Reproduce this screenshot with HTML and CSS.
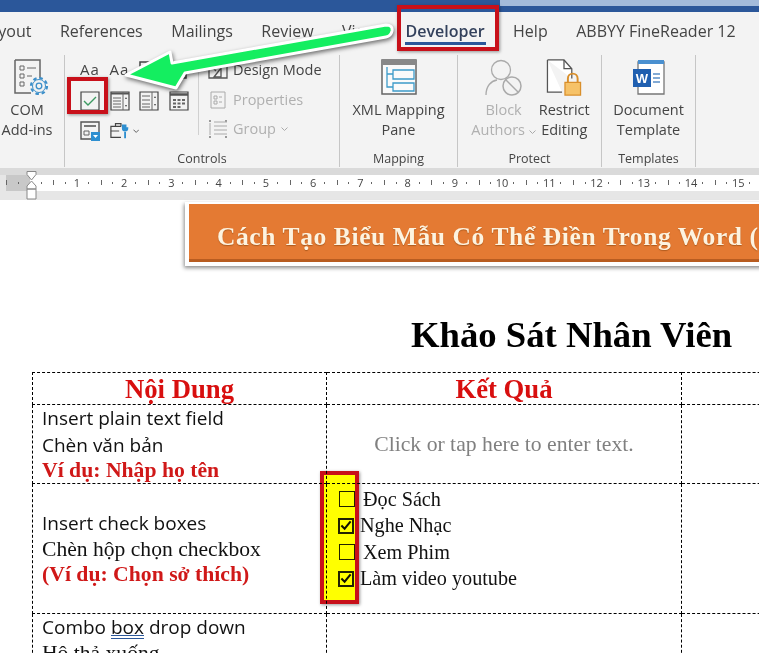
FILE: index.html
```html
<!DOCTYPE html>
<html lang="en">
<head>
    <meta charset="UTF-8">
    <meta name="viewport" content="width=device-width, initial-scale=1.0">
    <title>Biểu Mẫu Word</title>
    <link rel="stylesheet" href="styles.css">
</head>
<body>
    <!-- Title bar -->
    <div class="titlebar"><div class="titlebar-light"></div></div>

    <!-- Tabs -->
    <div class="tabs">
        <span class="tab">Layout</span>
        <span class="tab">References</span>
        <span class="tab">Mailings</span>
        <span class="tab">Review</span>
        <span class="tab">View</span>
        <span class="tab tab-active">Developer</span>
        <span class="tab">Help</span>
        <span class="tab">ABBYY FineReader 12</span>
    </div>

    <!-- Ribbon -->
    <div class="ribbon">
        <div class="group group-addins">
            <div class="group-body">
                <div class="big-btn">
                    <svg class="big-icon" width="36" height="37" viewBox="0 0 36 37">
                        <path d="M1 1h25v20M17 34H1V1" fill="none" stroke="#666" stroke-width="1.500"/>
                        <path d="M6 7h4v4H6zM6 15h4v4H6zM6 23h4v4H6z" fill="none" stroke="#666"/>
                        <path d="M13 9h9M13 17h5" stroke="#666"/>
                        <circle cx="25" cy="27" r="8" fill="#f3f3f3" stroke="#3d8fc9" stroke-width="2.200" stroke-dasharray="3.500 2.800"/>
                        <circle cx="25" cy="27" r="6.500" fill="none" stroke="#3d8fc9"/>
                        <circle cx="25" cy="27" r="2.800" fill="none" stroke="#3d8fc9" stroke-width="1.300"/>
                    </svg>
                    <span>COM<br>Add-ins</span>
                </div>
            </div>
        </div>

        <div class="group group-controls">
            <div class="group-body controls-body">
                <div class="small-grid">
                    <span class="aa">Aa</span>
                    <span class="aa">Aa</span>
                    <svg width="18" height="18" viewBox="0 0 18 18"><path d="M1 1h16v16H1z" fill="none" stroke="#444" stroke-width="1.500"/></svg>
                    <svg width="18" height="18" viewBox="0 0 18 18"><path d="M1 1h16v16H1z" fill="none" stroke="#444" stroke-width="1.500"/></svg>

                    <svg width="20" height="20" viewBox="0 0 20 20"><path d="M1 1h18v18H1z" fill="none" stroke="#444" stroke-width="1.200"/><path d="M4 10l4 4 8-8" fill="none" stroke="#3d9a62" stroke-width="1.400"/></svg>
                    <svg width="20" height="20" viewBox="0 0 20 20"><path d="M1 1h18v18H1z" fill="none" stroke="#444" stroke-width="1.200"/><path d="M1 2.500h18" stroke="#555" stroke-width="2"/><path d="M3 7h8M3 10h8M3 13h8M3 16h8M13 1v18" stroke="#666"/><path d="M15 8h2l-1-2zM15 14h2l-1 2z" fill="#444"/></svg>
                    <svg width="20" height="20" viewBox="0 0 20 20"><path d="M1 1h18v18H1z" fill="none" stroke="#444" stroke-width="1.200"/><path d="M3 5h8M3 9h8M3 13h8M3 16h8M13 1v18" stroke="#666"/><path d="M15 7h2l-1-2zM15 13h2l-1 2z" fill="#444"/></svg>
                    <svg width="20" height="20" viewBox="0 0 20 20"><path d="M1 1h18v18H1z" fill="none" stroke="#444" stroke-width="1.200"/><path d="M1 3.500h18" stroke="#555" stroke-width="2.500"/><path d="M4 8h3v2H4zM8.500 8h3v2h-3zM13 8h3v2h-3zM4 11.500h3v2H4zM8.500 11.500h3v2h-3zM13 11.500h3v2h-3zM4 15h3v2H4zM8.500 15h3v2h-3z" fill="#666"/></svg>

                    <svg width="20" height="20" viewBox="0 0 20 20"><path d="M11 18H1V1h18v10" fill="none" stroke="#555" stroke-width="1.400"/><path d="M4 5h12" stroke="#777" stroke-width="2"/><path d="M4 10h5v4H4z" fill="none" stroke="#666"/><path d="M11 11h9v9h-9z" fill="#2e8fd0"/><path d="M13 14h5l-2.500 3z" fill="#fff"/></svg>
                    <div class="tools-btn">
                        <svg width="22" height="20" viewBox="0 0 22 20"><path d="M12 5H1v12h11M6 5V2h6v3" fill="none" stroke="#444" stroke-width="1.300"/><path d="M1 10h9" stroke="#444"/><path d="M13 3v4a3.500 3.500 0 0 0 7 0V3v3h-2V3zM15.500 10h2v8h-2z" fill="#2e8fd0"/></svg>
                        <svg width="7" height="5" viewBox="0 0 7 5"><path d="M.5.500l3 3 3-3" fill="none" stroke="#555"/></svg>
                    </div>
                </div>
                <div class="design-col">
                    <div class="design-row">
                        <svg width="20" height="18" viewBox="0 0 20 18"><path d="M1 3h18v14H1z" fill="none" stroke="#555" stroke-width="1.300"/><path d="M6 16L13 7v9zM3 5l5 5" fill="none" stroke="#555" stroke-width="1.300"/><path d="M1 1h18" stroke="#999"/></svg>
                        <span>Design Mode</span>
                    </div>
                    <div class="design-row is-disabled">
                        <svg width="20" height="18" viewBox="0 0 20 18"><path d="M3 1h14v16H3z" fill="none" stroke="#aaa"/><path d="M6 5h3v3H6zM6 10h3v3H6z" fill="none" stroke="#aaa"/><path d="M11 6h3M11 11h3" stroke="#aaa"/></svg>
                        <span>Properties</span>
                    </div>
                    <div class="design-row is-disabled">
                        <svg width="20" height="20" viewBox="0 0 20 20"><path d="M1 1h2v2H1zM17 1h2v2h-2zM1 17h2v2H1zM17 17h2v2h-2z" fill="#999"/><path d="M2 4v12M6 3h13M6 7h13M6 11h13M6 15h13" stroke="#aaa"/></svg>
                        <span>Group</span>
                        <svg width="7" height="5" viewBox="0 0 7 5"><path d="M.5.500l3 3 3-3" fill="none" stroke="#aaa"/></svg>
                    </div>
                </div>
            </div>
            <div class="group-label">Controls</div>
        </div>

        <div class="group group-mapping">
            <div class="group-body group-center">
                <div class="big-btn">
                    <svg class="big-icon" width="36" height="37" viewBox="0 0 36 37">
                        <path d="M1 1h34v34H1z" fill="#fafafa" stroke="#666" stroke-width="1.500"/>
                        <path d="M1 1h34v5H1z" fill="#888"/>
                        <path d="M12 11h21v9H12zM12 24h21v8H12zM6 8v20h6M6 15h6" fill="none" stroke="#3d9bc9" stroke-width="1.300"/>
                    </svg>
                    <span>XML Mapping<br>Pane</span>
                </div>
            </div>
            <div class="group-label">Mapping</div>
        </div>

        <div class="group group-protect">
            <div class="group-body group-center protect-body">
                <div class="big-btn is-disabled">
                    <svg class="big-icon" width="38" height="37" viewBox="0 0 38 37">
                        <circle cx="16" cy="11" r="9.500" fill="none" stroke="#aaa" stroke-width="1.300"/>
                        <path d="M1 36c0-9 5-14 11-15" fill="none" stroke="#aaa" stroke-width="1.300"/>
                        <circle cx="27" cy="27" r="9" fill="none" stroke="#aaa" stroke-width="1.500"/>
                        <path d="M21 21l12 12" stroke="#aaa" stroke-width="1.500"/>
                    </svg>
                    <span>Block<br>Authors <svg width="7" height="5" viewBox="0 0 7 5"><path d="M.5.500l3 3 3-3" fill="none" stroke="#aaa"/></svg></span>
                </div>
                <div class="big-btn">
                    <svg class="big-icon" width="36" height="38" viewBox="0 0 36 38">
                        <path d="M1 1h17l8 9v10M16 34H1V1" fill="#fff" stroke="#555" stroke-width="1.300"/>
                        <path d="M18 1v9h8" fill="none" stroke="#555" stroke-width="1.300"/>
                        <path d="M19 24h16v13H19z" fill="#f6c268" stroke="#d98f2b" stroke-width="1.300"/>
                        <path d="M22 24v-4a5 5 0 0 1 10 0v4" fill="none" stroke="#d98f2b" stroke-width="2"/>
                    </svg>
                    <span>Restrict<br>Editing</span>
                </div>
            </div>
            <div class="group-label">Protect</div>
        </div>

        <div class="group group-templates">
            <div class="group-body group-center">
                <div class="big-btn">
                    <svg class="big-icon" width="34" height="37" viewBox="0 0 34 37">
                        <path d="M6 3h26v32H6z" fill="#fff" stroke="#777" stroke-width="1.300"/>
                        <path d="M6 1h26v4H6z" fill="#4a90d0"/>
                        <path d="M1 10h18v18H1z" fill="#1f5fb0"/>
                        <text class="w-letter" x="10" y="24" text-anchor="middle">W</text>
                        <path d="M21 15h7M21 19h7M21 23h7" stroke="#5a8fc8" stroke-width="1.500"/>
                    </svg>
                    <span>Document<br>Template</span>
                </div>
            </div>
            <div class="group-label">Templates</div>
        </div>
    </div>

    <!-- Ruler -->
    <div class="ruler-band">
        <div class="ruler">
            <span class="inch"></span>
            <span class="inch">1</span>
            <span class="inch">2</span>
            <span class="inch">3</span>
            <span class="inch">4</span>
            <span class="inch">5</span>
            <span class="inch">6</span>
            <span class="inch">7</span>
            <span class="inch">8</span>
            <span class="inch">9</span>
            <span class="inch">10</span>
            <span class="inch">11</span>
            <span class="inch">12</span>
            <span class="inch">13</span>
            <span class="inch">14</span>
            <span class="inch">15</span>
        </div>
    </div>

    <!-- Page -->
    <div class="page">
        <div class="banner">Cách Tạo Biểu Mẫu Có Thể Điền Trong Word (</div>
        <h1 class="doc-title">Khảo Sát Nhân Viên</h1>
        <table class="survey">
            <tr class="row-head">
                <th class="col-a">Nội Dung</th>
                <th class="col-b">Kết Quả</th>
                <th class="col-c"></th>
            </tr>
            <tr class="row-text">
                <td>
                    <div class="calibri">Insert plain text field</div>
                    <div class="calibri">Chèn văn bản</div>
                    <div class="red-note">Ví dụ: Nhập họ tên</div>
                </td>
                <td class="placeholder">Click or tap here to enter text.</td>
                <td></td>
            </tr>
            <tr class="row-check">
                <td>
                    <div class="calibri">Insert check boxes</div>
                    <div class="serif-line">Chèn hộp chọn checkbox</div>
                    <div class="red-note">(Ví dụ: Chọn sở thích)</div>
                </td>
                <td class="check-cell">
                    <div class="check-row"><span class="box"></span><span class="check-label">Đọc Sách</span></div>
                    <div class="check-row"><span class="box is-checked"><svg width="13" height="11" viewBox="0 0 13 11"><path d="M1.500 5.500l3.500 3.500 6.500-8" fill="none" stroke="#111" stroke-width="2.200"/></svg></span><span class="check-label is-tight">Nghe Nhạc</span></div>
                    <div class="check-row"><span class="box"></span><span class="check-label">Xem Phim</span></div>
                    <div class="check-row"><span class="box is-checked"><svg width="13" height="11" viewBox="0 0 13 11"><path d="M1.500 5.500l3.500 3.500 6.500-8" fill="none" stroke="#111" stroke-width="2.200"/></svg></span><span class="check-label is-tight">Làm video youtube</span></div>
                </td>
                <td></td>
            </tr>
            <tr class="row-combo">
                <td>
                    <div class="calibri">Combo <span class="squiggle">box</span> drop down</div>
                    <div class="serif-line">Hộ thả xuống</div>
                </td>
                <td></td>
                <td></td>
            </tr>
        </table>
    </div>

    <!-- Annotations on top of the screenshot -->
    <svg class="indent-marker" width="11" height="29" viewBox="0 0 11 29">
        <path d="M1 .5h9v3L5.500 9 1 3.500zM5.500 10L10 15v3H1v-3zM1 18h9v10H1z" fill="#fff" stroke="#888"/>
    </svg>
    <div class="mark mark-developer"></div>
    <div class="mark mark-checkbox"></div>
    <div class="mark mark-yellow"></div>
    <svg class="arrow" width="759" height="120" viewBox="0 0 759 120">
        <path class="arrow-shape" d="M126 75L170 52L172 63L386 25Q393 25 392 31Q391 36 386 37L185 73L176 88Z"/>
    </svg>
</body>
</html>
```

FILE: styles.css
```css
/* General styles */
html, body {
    margin: 0;
    padding: 0;
}

body {
    width: 759px;
    height: 653px;
    overflow: hidden;
    position: relative;
    background: #fff;
    font-family: "Liberation Serif", serif;
    color: #111;
}

/* Title bar */
.titlebar {
    height: 12px;
    background: #2b579a;
}

.titlebar-light {
    height: 6px;
    margin-left: 500px;
    background: #a3bbdb;
}

/* Tabs */
.tabs {
    height: 36px;
    display: flex;
    align-items: center;
    gap: 28.500px;
    margin-left: -19px;
    background: #f3f3f3;
    font-family: "Open Sans", sans-serif;
    font-size: 16px;
    color: #444;
    white-space: nowrap;
    padding-top: 2px;
    box-sizing: border-box;
    width: 778px;
}

.tab {
    position: relative;
}

.tab-active {
    font-weight: 600;
    color: #33415c;
}

.tab-active::after {
    content: "";
    position: absolute;
    left: -1px;
    right: -1px;
    bottom: -3px;
    height: 3px;
    background: #2b579a;
}

/* Ribbon */
.ribbon {
    height: 120px;
    display: flex;
    background: #f3f3f3;
    font-family: "Open Sans", sans-serif;
    font-size: 14.500px;
    line-height: 20px;
    color: #444;
}

.group {
    box-sizing: border-box;
    height: 112px;
    margin-top: 7px;
    border-right: 1px solid #c6c6c6;
    display: flex;
    flex-direction: column;
    padding-top: 4px;
}

.group-addins { width: 65px; }
.group-controls { width: 275px; }
.group-mapping { width: 118px; }
.group-protect { width: 144px; }
.group-templates { width: 94px; }

.group-body {
    flex: 1;
    display: flex;
}

.group-center {
    justify-content: center;
}

.group-label {
    text-align: center;
    font-size: 12.500px;
    line-height: 16px;
}

.big-btn {
    display: flex;
    flex-direction: column;
    align-items: center;
    text-align: center;
    white-space: nowrap;
}

.group-addins .big-btn {
    width: 52px;
    margin-left: 1px;
}

.group-addins .big-icon {
    margin-left: 10px;
}

.big-icon {
    height: 37px;
    margin-bottom: 4px;
}

.is-disabled {
    color: #b0b0b0;
}

.protect-body {
    gap: 3px;
    padding-left: 2px;
}

/* Controls group */
.controls-body {
    padding-left: 15px;
}

.small-grid {
    width: 118px;
    height: 74px;
    margin-top: 2px;
    display: grid;
    grid-template-columns: repeat(4, 29.500px);
    grid-template-rows: repeat(3, 30px);
    border-right: 1px solid #d0d0d0;
}

.aa {
    font-size: 15px;
    line-height: 16px;
    letter-spacing: 1px;
}

.tools-btn {
    display: flex;
    align-items: center;
    gap: 3px;
    height: 20px;
    white-space: nowrap;
}

.design-col {
    margin: 1px 0 0 9px;
    display: flex;
    flex-direction: column;
    gap: 9.500px;
}

.design-row {
    height: 20px;
    display: flex;
    align-items: center;
    gap: 5px;
    white-space: nowrap;
}

/* Ruler */
.ruler-band {
    height: 32px;
    background: linear-gradient(#dadada 7px, #e6e6e6 7px);
    box-sizing: border-box;
    padding-top: 7px;
}

.ruler {
    height: 16px;
    display: flex;
    padding-left: 6px;
    background: linear-gradient(to right, #e6e6e6 6px, #c8c8c8 6px, #c8c8c8 30px, #fff 30px);
    font-family: "Open Sans", sans-serif;
    font-size: 11px;
    line-height: 16px;
    color: #444;
}

.inch {
    flex: 0 0 47.250px;
    text-align: center;
    background-image:
        linear-gradient(#666, #666),
        linear-gradient(#666, #666),
        linear-gradient(#666, #666);
    background-repeat: no-repeat;
    background-size: 1px 2px, 1px 2px, 1px 5px;
    background-position: 25% 7px, 75% 7px, 0 5px;
}

/* Page */
.page {
    background: #fff;
    padding-top: 2px;
}

.banner {
    box-sizing: border-box;
    width: 640px;
    height: 64px;
    margin-left: 185px;
    border: 4px solid #fff;
    border-top-width: 2px;
    background: #e47a33;
    box-shadow: -1px 2px 4px rgba(0, 0, 0, 0.45), inset 0 -3px 0 #b85c20;
    color: #fdf3e0;
    font-size: 25.500px;
    font-weight: bold;
    line-height: 66px;
    padding-left: 28px;
    letter-spacing: 0.600px;
    white-space: nowrap;
    text-shadow: 0 1px 1px rgba(120, 60, 10, 0.5);
}

.doc-title {
    margin: 48px 0 0 411px;
    font-size: 36.700px;
    line-height: 42px;
    font-weight: bold;
    color: #000;
    white-space: nowrap;
}

/* Survey table */
.survey {
    margin: 16px 0 0 32px;
    width: 900px;
    table-layout: fixed;
    border-collapse: collapse;
}

.survey th,
.survey td {
    border: 1px dashed #000;
    padding: 0 0 0 9px;
    vertical-align: middle;
}

.col-a { width: 293px; }
.col-b { width: 354px; }

.survey th {
    padding: 0;
    color: #d80f0f;
    font-size: 26.700px;
    line-height: 30px;
}

.row-head { height: 32px; }
.row-text { height: 78px; }
.row-check { height: 130px; }
.row-combo { height: 90px; }
.row-combo td { vertical-align: top; }

.calibri {
    font-family: "Open Sans", sans-serif;
    font-size: 19px;
    line-height: 26.500px;
    color: #111;
}

.serif-line {
    font-size: 21.600px;
    line-height: 25px;
    color: #111;
}

.red-note {
    font-size: 21.700px;
    line-height: 25px;
    font-weight: bold;
    color: #d01818;
}

.survey .placeholder {
    padding: 0;
    text-align: center;
    font-size: 21.700px;
    color: #808080;
}

.squiggle {
    text-decoration: underline double #2b579a;
}

/* Check boxes */
.survey .check-cell {
    padding-left: 12px;
    vertical-align: top;
    padding-top: 2px;
}

.check-row {
    height: 26.500px;
    display: flex;
    align-items: center;
}

.box {
    box-sizing: border-box;
    width: 16px;
    height: 16px;
    border: 1px solid #222;
    display: flex;
    align-items: center;
    justify-content: center;
}

.box.is-checked {
    border-width: 2px;
    margin-left: -1px;
    margin-right: 1px;
}

.check-label {
    margin-left: 8px;
    font-size: 20.200px;
}

.check-label.is-tight {
    margin-left: 5px;
}

/* Annotations */
.indent-marker {
    position: absolute;
    left: 26px;
    top: 171px;
}

.mark {
    position: absolute;
    box-sizing: border-box;
    border: 4px solid #c8101a;
    box-shadow: 1px 1px 3px rgba(0, 0, 0, 0.4);
}

.mark-developer {
    left: 397px;
    top: 5px;
    width: 102px;
    height: 46px;
}

.mark-checkbox {
    left: 67px;
    top: 77px;
    width: 41px;
    height: 37px;
}

.mark-yellow {
    left: 320px;
    top: 471px;
    width: 39px;
    height: 133px;
    background: #ffff00;
    mix-blend-mode: multiply;
}

.arrow {
    position: absolute;
    left: 0;
    top: 0;
    overflow: visible;
}

.arrow-shape {
    fill: #14ee60;
    stroke: #fff;
    stroke-width: 3;
    stroke-linejoin: round;
    filter: drop-shadow(1px 2px 2px rgba(0, 0, 0, 0.55));
}

.w-letter {
    font-family: "Liberation Sans", sans-serif;
    font-size: 13px;
    font-weight: bold;
    fill: #fff;
}
```
